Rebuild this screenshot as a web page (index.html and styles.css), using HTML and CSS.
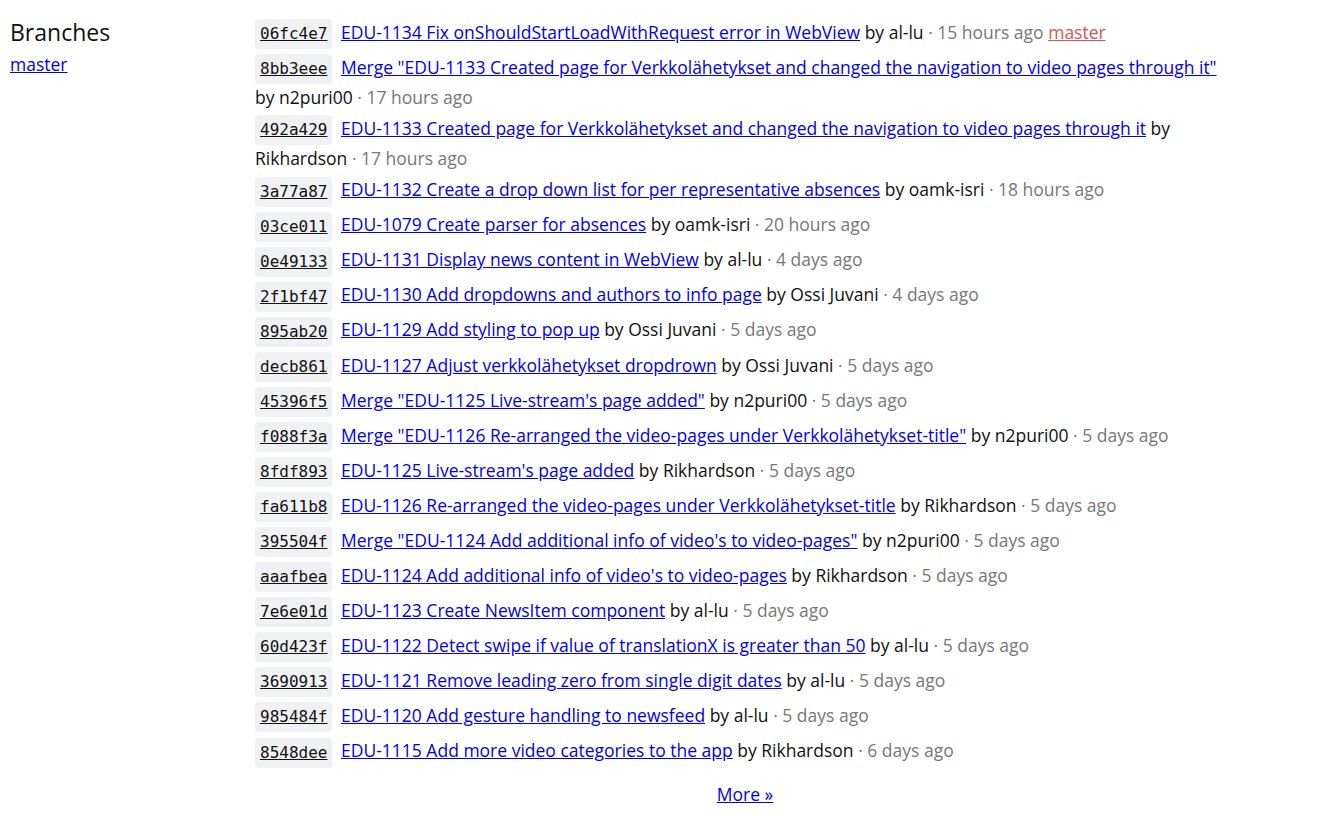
FILE: index.html
```html
<!DOCTYPE html>
<html>
<head>
<meta charset="utf-8">
<link rel="stylesheet" href="styles.css">
</head>
<body>
<div class="page">
  <aside class="side">
    <h2 class="side-title">Branches</h2>
    <a class="branch" href="#">master</a>
  </aside>
  <main class="main">
    <ul class="commits">
      <li><a class="hash" href="#">06fc4e7</a> <a href="#">EDU-1134 Fix onShouldStartLoadWithRequest error in WebView</a> by al-lu <span class="meta">· 15 hours ago</span> <a class="tag" href="#">master</a></li>
      <li><a class="hash" href="#">8bb3eee</a> <a href="#">Merge "EDU-1133 Created page for Verkkolähetykset and changed the navigation to video pages through it"</a> by n2puri00 <span class="meta">· 17 hours ago</span></li>
      <li><a class="hash" href="#">492a429</a> <a href="#">EDU-1133 Created page for Verkkolähetykset and changed the navigation to video pages through it</a> by Rikhardson <span class="meta">· 17 hours ago</span></li>
      <li><a class="hash" href="#">3a77a87</a> <a href="#">EDU-1132 Create a drop down list for per representative absences</a> by oamk-isri <span class="meta">· 18 hours ago</span></li>
      <li><a class="hash" href="#">03ce011</a> <a href="#">EDU-1079 Create parser for absences</a> by oamk-isri <span class="meta">· 20 hours ago</span></li>
      <li><a class="hash" href="#">0e49133</a> <a href="#">EDU-1131 Display news content in WebView</a> by al-lu <span class="meta">· 4 days ago</span></li>
      <li><a class="hash" href="#">2f1bf47</a> <a href="#">EDU-1130 Add dropdowns and authors to info page</a> by Ossi Juvani <span class="meta">· 4 days ago</span></li>
      <li><a class="hash" href="#">895ab20</a> <a href="#">EDU-1129 Add styling to pop up</a> by Ossi Juvani <span class="meta">· 5 days ago</span></li>
      <li><a class="hash" href="#">decb861</a> <a href="#">EDU-1127 Adjust verkkolähetykset dropdrown</a> by Ossi Juvani <span class="meta">· 5 days ago</span></li>
      <li><a class="hash" href="#">45396f5</a> <a href="#">Merge "EDU-1125 Live-stream's page added"</a> by n2puri00 <span class="meta">· 5 days ago</span></li>
      <li><a class="hash" href="#">f088f3a</a> <a href="#">Merge "EDU-1126 Re-arranged the video-pages under Verkkolähetykset-title"</a> by n2puri00 <span class="meta">· 5 days ago</span></li>
      <li><a class="hash" href="#">8fdf893</a> <a href="#">EDU-1125 Live-stream's page added</a> by Rikhardson <span class="meta">· 5 days ago</span></li>
      <li><a class="hash" href="#">fa611b8</a> <a href="#">EDU-1126 Re-arranged the video-pages under Verkkolähetykset-title</a> by Rikhardson <span class="meta">· 5 days ago</span></li>
      <li><a class="hash" href="#">395504f</a> <a href="#">Merge "EDU-1124 Add additional info of video's to video-pages"</a> by n2puri00 <span class="meta">· 5 days ago</span></li>
      <li><a class="hash" href="#">aaafbea</a> <a href="#">EDU-1124 Add additional info of video's to video-pages</a> by Rikhardson <span class="meta">· 5 days ago</span></li>
      <li><a class="hash" href="#">7e6e01d</a> <a href="#">EDU-1123 Create NewsItem component</a> by al-lu <span class="meta">· 5 days ago</span></li>
      <li><a class="hash" href="#">60d423f</a> <a href="#">EDU-1122 Detect swipe if value of translationX is greater than 50</a> by al-lu <span class="meta">· 5 days ago</span></li>
      <li><a class="hash" href="#">3690913</a> <a href="#">EDU-1121 Remove leading zero from single digit dates</a> by al-lu <span class="meta">· 5 days ago</span></li>
      <li><a class="hash" href="#">985484f</a> <a href="#">EDU-1120 Add gesture handling to newsfeed</a> by al-lu <span class="meta">· 5 days ago</span></li>
      <li><a class="hash" href="#">8548dee</a> <a href="#">EDU-1115 Add more video categories to the app</a> by Rikhardson <span class="meta">· 6 days ago</span></li>
    </ul>
    <div class="more"><a href="#">More »</a></div>
  </main>
</div>
</body>
</html>
```
FILE: styles.css
```css
html, body {
  margin: 0;
  padding: 0;
  background: #fff;
}
body {
  font-family: "Open Sans", "Liberation Sans", sans-serif;
  font-size: 17.5px;
  color: #111;
}
a {
  color: #0000ee;
}
.page {
  display: flex;
  padding: 19px 10px 0 10px;
}
.side {
  width: 245px;
  flex: none;
}
.side-title {
  margin: 0;
  font-size: 23px;
  font-weight: 400;
  line-height: 26px;
}
.branch {
  display: inline-block;
  margin-top: 6px;
  line-height: 26px;
}
.main {
  width: 980px;
  flex: none;
}
.commits {
  list-style: none;
  margin: 0;
  padding: 0;
}
.commits li {
  line-height: 26px;
  margin-bottom: 4.75px;
}
.hash {
  display: inline-block;
  font-family: "DejaVu Sans Mono", "Liberation Mono", monospace;
  font-size: 16px;
  line-height: 22px;
  padding: 4px 5px;
  background: #f0f1f3;
  border-radius: 4px;
  color: #111;
  margin-right: 4px;
  vertical-align: middle;
}
.meta {
  color: #777;
}
.tag {
  color: #d9534f;
}
.more {
  text-align: center;
  margin-top: 14px;
}
```
